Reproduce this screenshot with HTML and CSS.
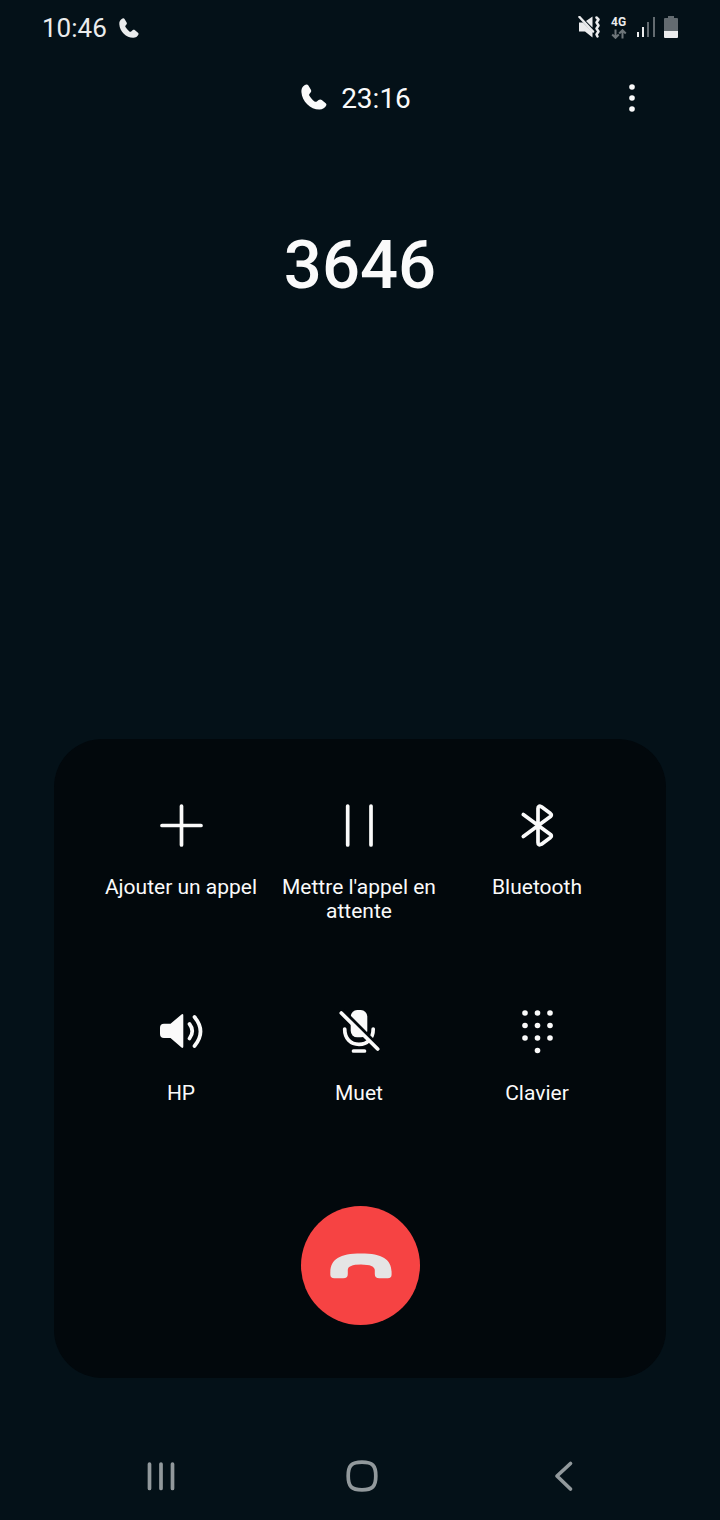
FILE: index.html
```html
<!DOCTYPE html>
<html lang="fr">
<head>
<meta charset="utf-8">
<meta name="viewport" content="width=device-width, initial-scale=1">
<title>Appel en cours</title>
<link rel="stylesheet" href="styles.css">
</head>
<body>
<div class="phone">
  <div class="status">
    <div class="status-left">
      <time>10:46</time>
      <svg class="call-small" viewBox="0 0 26 26" aria-hidden="true"><path d="M3.500 1.200C1.200 2.800 .2 5 .4 8C1 17.500 9.500 25.700 18.500 25.600C21.500 25.600 24.300 23.800 25.300 21.300C25.600 20.400 25.400 19.800 24.700 19.200L20.800 16C19.800 15.200 18.600 15.200 17.600 16L15.800 17.400C15 18 14.300 18 13.500 17.400C11.400 15.800 9.700 13.800 8.400 11.700C8 10.900 8 10.300 8.600 9.700L9.600 8.600C10.400 7.700 10.400 6.800 9.900 5.800L7.400 1.500C6.600 .1 5 .1 3.500 1.200Z"/></svg>
    </div>
    <div class="status-right">
      <svg class="vibrate" viewBox="0 0 23 22" aria-hidden="true">
        <path d="M1 6.500H5L14.500 16V21.500L7 15.500H1ZM8 5L14.500 .5V11.500Z"/>
        <path class="line" d="M1.500 1L15 15.500M18.500 1.500L20.500 3.500L18.500 6.500L20.500 9.500L18.500 12.500L20.500 15.500L18.500 18.500L19.500 20.500"/>
      </svg>
      <div class="network">
        <span>4G</span>
        <svg viewBox="0 0 16 10" aria-hidden="true"><path d="M4.500 .5V8.500M1.200 5.500L4.500 8.800L7.800 5.500M11.500 9.500V1.500M8.200 4.500L11.500 1.200L14.800 4.500"/></svg>
      </div>
      <svg class="signal" viewBox="0 0 18 20" aria-hidden="true"><path d="M0 15H2V20H0ZM5 10H7V20H5Z"/><path class="dim" d="M10 5H12V20H10ZM16 0H18V20H16Z"/></svg>
      <svg class="battery" viewBox="0 0 14 22" aria-hidden="true"><path class="dim" d="M4 0H10V2H13Q14 2 14 3V15H0V3Q0 2 1 2H4Z"/><path d="M0 15H14V21Q14 22 13 22H1Q0 22 0 21Z"/></svg>
    </div>
  </div>

  <header class="call-bar">
    <div class="duration">
      <svg viewBox="0 0 26 26" aria-hidden="true"><path d="M3.500 1.200C1.200 2.800 .2 5 .4 8C1 17.500 9.500 25.700 18.500 25.600C21.500 25.600 24.300 23.800 25.300 21.300C25.600 20.400 25.400 19.800 24.700 19.200L20.800 16C19.800 15.200 18.600 15.200 17.600 16L15.800 17.400C15 18 14.300 18 13.500 17.400C11.400 15.800 9.700 13.800 8.400 11.700C8 10.900 8 10.300 8.600 9.700L9.600 8.600C10.400 7.700 10.400 6.800 9.900 5.800L7.400 1.500C6.600 .1 5 .1 3.500 1.200Z"/></svg>
      <span>23:16</span>
    </div>
    <button class="more" type="button" aria-label="Plus d'options">
      <svg viewBox="0 0 8 28" aria-hidden="true"><circle cx="4" cy="3" r="2.800"/><circle cx="4" cy="14" r="2.800"/><circle cx="4" cy="25" r="2.800"/></svg>
    </button>
  </header>

  <h1 class="caller">3646</h1>

  <main class="panel">
    <div class="actions">
      <button class="action" type="button">
        <svg viewBox="0 0 48 48" aria-hidden="true"><path class="line" d="M24.500 5V44M5 24.500H44"/></svg>
        <span>Ajouter un appel</span>
      </button>
      <button class="action" type="button">
        <svg viewBox="0 0 48 48" aria-hidden="true"><path class="line" d="M12.700 5V44M36 5V44"/></svg>
        <span>Mettre l'appel en attente</span>
      </button>
      <button class="action" type="button">
        <svg viewBox="0 0 48 48" aria-hidden="true"><path class="line" d="M10.300 13.500L37.500 33.500Q39.200 35 37.500 36.400L28.500 43.200Q25 45 25 41.500V7.500Q25 4 28.500 5.800L37.500 12.600Q39.200 14 37.500 15.500L10.300 35.500"/></svg>
        <span>Bluetooth</span>
      </button>
      <button class="action" type="button">
        <svg viewBox="0 0 48 48" aria-hidden="true"><path d="M7 16.700H13.500L24.500 7.500Q26.300 6.200 26.300 8.500V39.500Q26.300 41.800 24.500 40.500L13.500 31H7Q3 31 3 27V20.700Q3 16.700 7 16.700Z"/><path class="line" d="M32.500 17Q38 24 32.500 31.500M37.500 10Q49.500 24.500 37.500 39"/></svg>
        <span>HP</span>
      </button>
      <button class="action" type="button">
        <svg viewBox="0 0 48 48" aria-hidden="true"><rect x="15.700" y="3" width="16.600" height="27.300" rx="6.500"/><path class="line" d="M9.700 22C9.700 31.500 15.500 37.300 24 37.300C32.500 37.300 38.200 31.500 38.200 22M18.500 44H29.500"/><path class="cut" d="M8 3.800L46 41.800"/><path class="line" d="M6.300 6L42.700 42"/></svg>
        <span>Muet</span>
      </button>
      <button class="action" type="button">
        <svg viewBox="0 0 48 48" aria-hidden="true"><circle cx="12" cy="6" r="2.800"/><circle cx="24.500" cy="6" r="2.800"/><circle cx="37" cy="6" r="2.800"/><circle cx="12" cy="18.500" r="2.800"/><circle cx="24.500" cy="18.500" r="2.800"/><circle cx="37" cy="18.500" r="2.800"/><circle cx="12" cy="31" r="2.800"/><circle cx="24.500" cy="31" r="2.800"/><circle cx="37" cy="31" r="2.800"/><circle cx="24.500" cy="43.500" r="2.800"/></svg>
        <span>Clavier</span>
      </button>
    </div>
    <button class="hang-up" type="button" aria-label="Raccrocher">
      <svg viewBox="0 0 64 26" aria-hidden="true"><path d="M2.300 20C2.300 6.500 11 .5 33 .5S63.600 6.500 63.600 20V21.500Q63.600 25.300 59.800 25.300H51.300Q46.800 25.300 46.800 21V17.500Q46.800 11.500 33 11.500T19.800 17.500V21Q19.800 25.300 15.300 25.300H6.300Q2.300 25.300 2.300 21.500Z"/></svg>
    </button>
  </main>

  <nav class="nav">
    <button type="button" aria-label="Applications récentes"><svg viewBox="0 0 32 32" aria-hidden="true"><path d="M4.500 4V28.500M16 4V28.500M27.500 4V28.500"/></svg></button>
    <button type="button" aria-label="Accueil"><svg viewBox="0 0 32 32" aria-hidden="true"><path d="M16 2.200C26.500 2.200 29.800 5.500 29.800 16S26.500 29.800 16 29.800S2.200 26.500 2.200 16S5.500 2.200 16 2.200Z"/></svg></button>
    <button type="button" aria-label="Retour"><svg viewBox="0 0 32 32" aria-hidden="true"><path d="M23.500 3.500L10 16L23.500 29"/></svg></button>
  </nav>
</div>
</body>
</html>
```

FILE: styles.css
```css
* {
  box-sizing: border-box;
}

body {
  margin: 0;
  background: #041118;
  color: #fafafa;
  font-family: Roboto, "Noto Sans", sans-serif;
}

button {
  padding: 0;
  border: 0;
  background: none;
  color: inherit;
  font: inherit;
  cursor: pointer;
}

svg {
  display: block;
  fill: currentColor;
}

.line {
  fill: none;
  stroke: currentColor;
  stroke-width: 3.7;
  stroke-linecap: round;
  stroke-linejoin: round;
}

.dim {
  fill: #636b70;
}

.phone {
  display: flex;
  flex-direction: column;
  min-height: 100vh;
}

.status {
  display: flex;
  align-items: center;
  justify-content: space-between;
  height: 56px;
  padding: 0 42px;
  color: #ebeced;
}

.status-left,
.status-right {
  display: flex;
  align-items: center;
}

.status-left {
  gap: 12px;
  font-size: 26px;
}

.call-small {
  width: 20px;
  height: 20px;
}

.status-right {
  padding-bottom: 2px;
}

.vibrate {
  width: 23px;
  height: 22px;
  margin-right: 10px;
}

.vibrate .line {
  stroke-width: 2.5;
}

.network {
  width: 16px;
  margin-right: 10px;
  font-size: 12px;
  font-weight: 700;
  line-height: 13px;
}

.network span {
  display: block;
}

.network svg {
  width: 16px;
  height: 10px;
  fill: none;
  stroke: #6e767a;
  stroke-width: 2;
}

.signal {
  width: 18px;
  height: 20px;
  margin-right: 9px;
}

.battery {
  width: 14px;
  height: 22px;
}

.call-bar {
  display: grid;
  grid-template-columns: 1fr auto 1fr;
  align-items: center;
  height: 84px;
  padding: 0 64px 0 56px;
}

.duration {
  display: flex;
  grid-column: 2;
  align-items: center;
  gap: 14px;
  font-size: 28px;
}

.duration svg {
  width: 26px;
  height: 26px;
  margin-bottom: 2px;
}

.more {
  justify-self: end;
  padding: 8px 20px;
}

.more svg {
  width: 8px;
  height: 28px;
}

.caller {
  margin: 85px 0 0;
  font-size: 67px;
  font-weight: 500;
  line-height: 80px;
  text-align: center;
}

.panel {
  display: flex;
  flex-direction: column;
  align-items: center;
  margin: auto 54px 62px;
  padding: 62px 40px 53px 38px;
  border-radius: 48px;
  background: #02080c;
}

.actions {
  display: grid;
  grid-template-columns: repeat(3, 1fr);
  width: 100%;
}

.action {
  display: flex;
  flex-direction: column;
  align-items: center;
  min-height: 206px;
  padding: 0 8px;
  font-size: 21px;
  line-height: 24px;
  text-align: center;
}

.action svg {
  width: 48px;
  height: 48px;
  margin-bottom: 26px;
}

.cut {
  fill: none;
  stroke: #02080c;
  stroke-width: 4;
}

.hang-up {
  display: grid;
  place-items: center;
  width: 119px;
  height: 119px;
  margin: -7px 0 0 2px;
  border-radius: 50%;
  background: #f64343;
  color: #e5e5e5;
}

.hang-up svg {
  width: 64px;
  height: 26px;
}

.nav {
  display: grid;
  grid-template-columns: repeat(3, 1fr);
  height: 80px;
  padding: 0 57px 0 60px;
  color: #92999c;
}

.nav button {
  display: grid;
  place-items: center;
  padding-bottom: 8px;
}

.nav svg {
  width: 32px;
  height: 32px;
  fill: none;
  stroke: currentColor;
  stroke-width: 3.7;
  stroke-linecap: round;
  stroke-linejoin: round;
}
```
